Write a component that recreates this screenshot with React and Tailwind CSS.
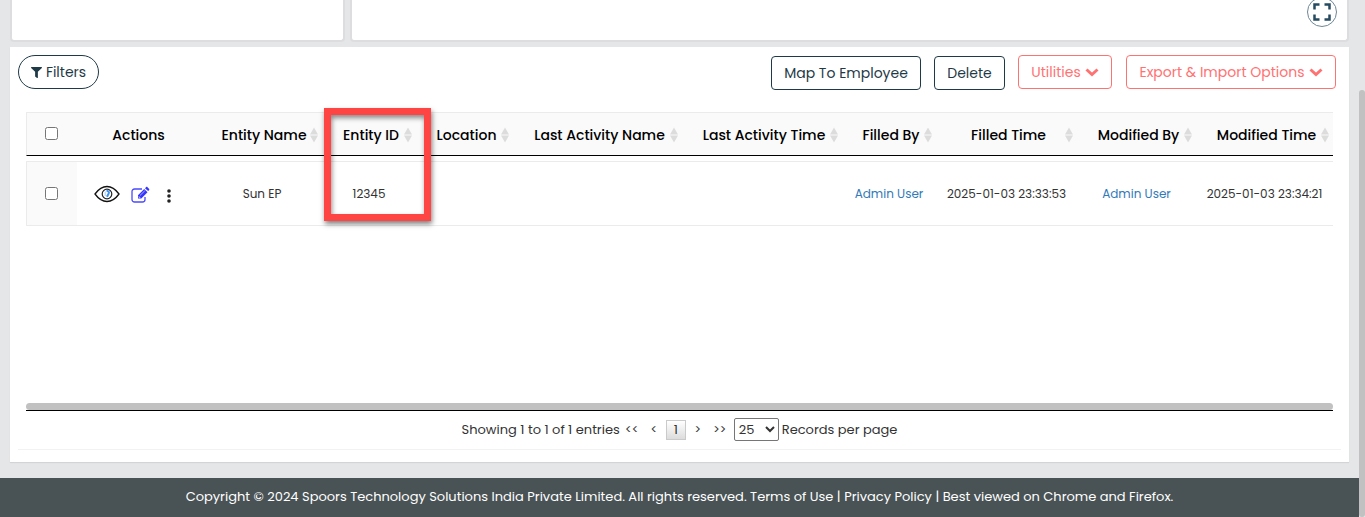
import { FaFilter } from "react-icons/fa";

const columns = [
  "Entity Name",
  "Entity ID",
  "Location",
  "Last Activity Name",
  "Last Activity Time",
  "Filled By",
  "Filled Time",
  "Modified By",
  "Modified Time",
];

function SortIcon() {
  return (
    <svg className="h-4 w-2 justify-self-end" viewBox="0 0 8 16" fill="#dcdcdc" aria-hidden="true">
      <path d="M4 .5 8 7.500H0zM4 15.500 0 8.500h8z" />
    </svg>
  );
}

function ChevronIcon() {
  return (
    <svg className="h-[14px] w-[14px]" viewBox="0 0 14 14" fill="none" stroke="currentColor" strokeWidth="3" aria-hidden="true">
      <path d="M1.500 4.500 7 9.500l5.500-5" />
    </svg>
  );
}

function EyeIcon() {
  return (
    <svg className="h-5 w-[26px]" viewBox="0 0 26 20" fill="none" aria-hidden="true">
      <path d="M1 10C5 4.500 9 2.500 13 2.500S21 4.500 25 10C21 15.500 17 17.500 13 17.500S5 15.500 1 10Z" stroke="#111" strokeWidth="1.300" />
      <circle cx="13" cy="10" r="4.800" stroke="#222" strokeWidth="1.200" />
      <path d="M12.500 6.800c2.200 0 3 1.800 2 3L13 12.800" stroke="#3c94f5" strokeWidth="2" />
      <path d="M11.200 7.500v4.500" stroke="#b5d4f8" strokeWidth="1.200" />
    </svg>
  );
}

function EditIcon() {
  return (
    <svg className="h-[18px] w-[19px]" viewBox="0 0 19 18" fill="none" aria-hidden="true">
      <path d="M11 3H3.500A2.500 2.500 0 0 0 1 5.500v8A2.500 2.500 0 0 0 3.500 16h8a2.500 2.500 0 0 0 2.500-2.500V11" stroke="#4a4aff" strokeWidth="1.300" />
      <path d="M7 12.500v-3.300L13.200 3l3.300 3.300-6.200 6.200zM14 2.200l1-1c.5-.5 1-.5 1.500 0l1.500 1.500c.5.500.5 1 0 1.500l-.9.900z" fill="#3535ff" />
      <path d="M9 9.500 13.800 4.800M8 10.200v1.300h1.300" stroke="#c9c9ff" strokeWidth=".8" />
    </svg>
  );
}

function ExpandIcon() {
  return (
    <svg className="h-[18px] w-[18px]" viewBox="0 0 18 18" fill="none" stroke="#264a60" strokeWidth="2.500" aria-hidden="true">
      <path d="M1.500 6.500v-5h5M11.500 1.500h5v5M16.500 11.500v5h-5M6.500 16.500h-5v-5" />
    </svg>
  );
}

function ToolButton({ className, children }) {
  return (
    <button className={"flex h-[34px] items-center justify-center gap-1 whitespace-nowrap border text-sm " + className}>
      {children}
    </button>
  );
}

export default function App() {
  return (
    <div className="flex bg-[#e5e6e8] font-['Poppins',Inter,sans-serif] text-[#333]">
      <div className="min-w-0 flex-1">
        <main className="px-[10px] pb-4">
          <div className="flex gap-[5px]">
            <section className="h-[42px] w-1/4 rounded-b border-2 border-t-0 border-[#dddddf] bg-white" />
            <section className="flex h-[42px] flex-1 justify-end rounded-b border-2 border-t-0 border-[#dddddf] bg-white pr-[10px]">
              <button aria-label="Full screen" className="-mt-[3px] flex h-[30px] w-[30px] items-center justify-center rounded-full border border-[#6f8796]">
                <ExpandIcon />
              </button>
            </section>
          </div>

          <section className="mt-[5px] bg-white px-2 pb-3 pt-2 shadow-[0_1px_1px_rgba(0,0,0,0.08)]">
            <div className="flex items-start justify-between pr-[5px]">
              <ToolButton className="w-[81px] rounded-full border-[#1f3a47] text-[#1f3a47]">
                <FaFilter className="h-[11px] w-[11px]" />
                Filters
              </ToolButton>
              <div className="flex gap-[14px]">
                <div className="flex gap-[13px]">
                  <div className="flex gap-[13px] pt-px">
                    <ToolButton className="w-[150px] rounded border-[#1f3a47] text-[#1f3a47]">Map To Employee</ToolButton>
                    <ToolButton className="w-[71px] rounded border-[#1f3a47] text-[#1f3a47]">Delete</ToolButton>
                  </div>
                  <ToolButton className="w-[94px] rounded border-[#ff7272] text-[#ff7272]">
                    Utilities
                    <ChevronIcon />
                  </ToolButton>
                </div>
                <ToolButton className="w-[210px] rounded border-[#ff7272] text-[#ff7272]">
                  Export &amp; Import Options
                  <ChevronIcon />
                </ToolButton>
              </div>
            </div>

            <div className="mt-[22px] border-b border-[#f2f2f2] px-2 pb-2">
              <div className="h-[291px]">
                <table className="w-full table-fixed border-separate border-spacing-0 text-center">
                  <colgroup>
                    <col className="w-[51px]" />
                    <col className="w-[125px]" />
                    <col className="w-[120px]" />
                    <col className="w-[94px]" />
                    <col className="w-[97px]" />
                    <col className="w-[169px]" />
                    <col className="w-[160px]" />
                    <col className="w-[94px]" />
                    <col className="w-[141px]" />
                    <col className="w-[119px]" />
                    <col />
                  </colgroup>
                  <thead className="bg-[#fafafa] text-sm font-medium text-black">
                    <tr className="h-11 [&>th]:border-b [&>th]:border-t [&>th]:border-b-black [&>th]:border-t-[#ebebeb] [&>th]:p-0 [&>th]:font-medium">
                      <th className="border-l border-l-[#ebebeb]">
                        <div className="pb-[2px] pr-[2px]">
                          <input type="checkbox" aria-label="Select all rows" className="mx-auto block h-[13px] w-[13px]" />
                        </div>
                      </th>
                      <th>
                        <div className="pr-[2px] pt-[2px]">Actions</div>
                      </th>
                      {columns.map((name) => (
                        <th key={name} className="relative">
                          <button className="grid w-full grid-cols-[1fr_auto_1fr] items-center whitespace-nowrap pl-2 pr-1 pt-[2px]">
                            <span />
                            {name}
                            <SortIcon />
                          </button>
                          {name === "Entity ID" && (
                            <div className="pointer-events-none absolute -top-[5px] left-[2px] z-10 h-[113px] w-[107px] border-[7px] border-[#ff4444] shadow-[1px_3px_5px_rgba(0,0,0,0.5),inset_1px_3px_5px_rgba(0,0,0,0.45)]" />
                          )}
                        </th>
                      ))}
                    </tr>
                  </thead>
                  <tbody className="text-xs before:block before:h-[5px] before:content-['']">
                    <tr className="h-[65px] [&>td]:border-y [&>td]:border-[#ebebeb] [&>td]:p-0">
                      <td className="border-l bg-[#fafafa]">
                        <div className="pr-[2px]">
                          <input type="checkbox" aria-label="Select Sun EP" className="mx-auto block h-[13px] w-[13px]" />
                        </div>
                      </td>
                      <td>
                        <div className="flex items-center pl-[17px]">
                          <button aria-label="View">
                            <EyeIcon />
                          </button>
                          <button aria-label="Edit" className="ml-[11px] pt-[2px]">
                            <EditIcon />
                          </button>
                          <button aria-label="More actions" className="ml-[17px] pt-1">
                            <svg className="h-[14px] w-1" viewBox="0 0 4 14" fill="#222" aria-hidden="true">
                              <circle cx="2" cy="2" r="1.800" />
                              <circle cx="2" cy="7" r="1.800" />
                              <circle cx="2" cy="12" r="1.800" />
                            </svg>
                          </button>
                        </div>
                      </td>
                      <td>Sun EP</td>
                      <td>12345</td>
                      <td />
                      <td />
                      <td />
                      <td><a href="#filled-by" className="text-[#337ab7]">Admin User</a></td>
                      <td className="whitespace-nowrap">2025-01-03 23:33:53</td>
                      <td><a href="#modified-by" className="text-[#337ab7]">Admin User</a></td>
                      <td className="whitespace-nowrap">2025-01-03 23:34:21</td>
                    </tr>
                  </tbody>
                </table>
              </div>
              <div className="border-b border-black">
                <div className="h-[7px] rounded bg-[#c1c1c1]" />
              </div>

              <div className="mt-[7px] flex h-[23px] items-center justify-center text-[13px]">
                <span>Showing 1 to 1 of 1 entries</span>
                <nav aria-label="Pagination" className="flex items-center">
                  <button aria-label="First page" className="ml-1 w-4 text-xs">&lt;&lt;</button>
                  <button aria-label="Previous page" className="ml-2 w-3 text-xs">&lt;</button>
                  <button className="mx-[6px] flex h-5 w-5 items-center justify-center border border-[#cacaca] bg-linear-to-b from-white to-[#dcdcdc]">1</button>
                  <button aria-label="Next page" className="w-3 text-xs">&gt;</button>
                  <button aria-label="Last page" className="ml-2 w-4 text-xs">&gt;&gt;</button>
                </nav>
                <label className="ml-[6px] flex items-center gap-[3px]">
                  <select className="h-[23px] w-[45px] rounded-[2px] border border-[#767676] bg-white" defaultValue="25">
                    <option>25</option>
                    <option>50</option>
                    <option>100</option>
                  </select>
                  Records per page
                </label>
              </div>
            </div>
          </section>
        </main>

        <footer className="flex h-[39px] items-center justify-center bg-[#495355] pb-[2px] text-[13px] text-white">
          <p>
            Copyright © 2024 Spoors Technology Solutions India Private Limited. All rights reserved.{" "}
            <a href="#terms">Terms of Use</a> | <a href="#privacy">Privacy Policy</a> | Best viewed on Chrome and Firefox.
          </p>
        </footer>
      </div>
      <div className="w-[6px] pt-[90px]" aria-hidden="true">
        <div className="h-full rounded bg-[#c1c1c1]" />
      </div>
    </div>
  );
}
